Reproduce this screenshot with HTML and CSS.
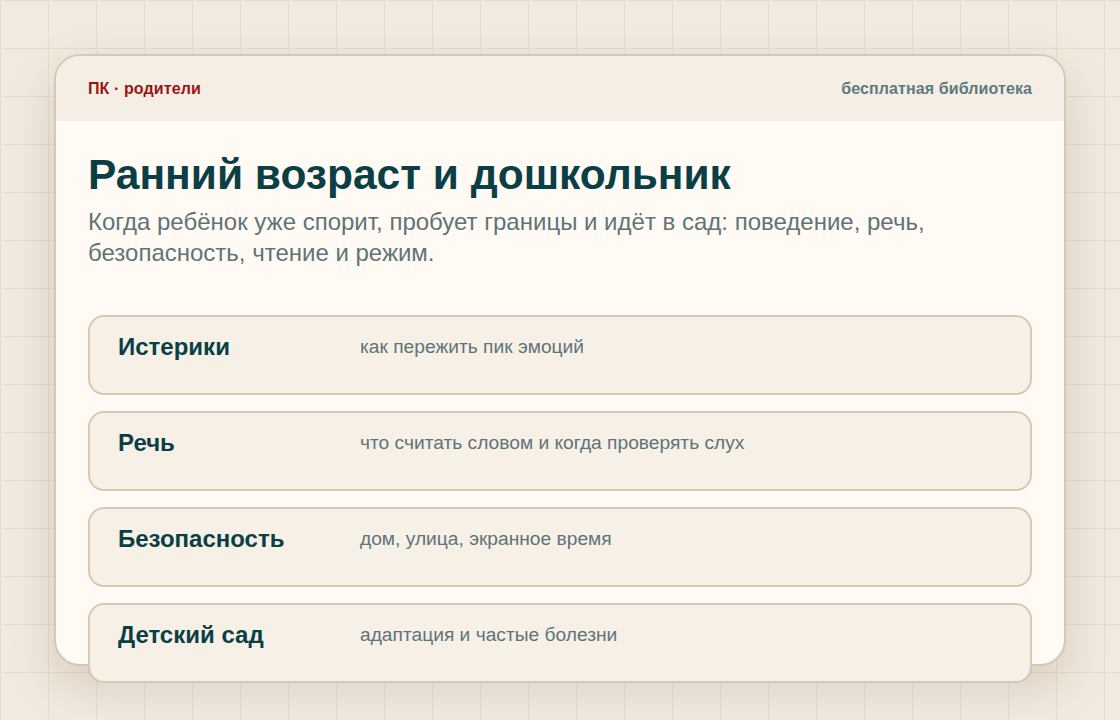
FILE: index.html
```html
<!DOCTYPE html>
<html lang="ru">
<head>
  <meta charset="UTF-8" />
  <meta name="viewport" content="width=device-width, initial-scale=1.0"/>
  <title>Ранний возраст и дошкольник</title>
  <link rel="stylesheet" href="styles.css">
</head>
<body>
  <div class="card">
    <header class="card-head">
      <span class="brand">ПК · родители</span>
      <span class="tag">бесплатная библиотека</span>
    </header>
    <main class="card-body">
      <h1>Ранний возраст и дошкольник</h1>
      <p class="lead">Когда ребёнок уже спорит, пробует границы и идёт в сад: поведение, речь, безопасность, чтение и режим.</p>
      <ul class="topics">
        <li class="topic">
          <span class="topic-title">Истерики</span>
          <span class="topic-desc">как пережить пик эмоций</span>
        </li>
        <li class="topic">
          <span class="topic-title">Речь</span>
          <span class="topic-desc">что считать словом и когда проверять слух</span>
        </li>
        <li class="topic">
          <span class="topic-title">Безопасность</span>
          <span class="topic-desc">дом, улица, экранное время</span>
        </li>
        <li class="topic">
          <span class="topic-title">Детский сад</span>
          <span class="topic-desc">адаптация и частые болезни</span>
        </li>
      </ul>
    </main>
  </div>
</body>
</html>
```

FILE: styles.css
```css
* {
  box-sizing: border-box;
  font-family: 'Liberation Sans', Arial, sans-serif;
}

body {
  margin: 0;
  height: 720px;
  overflow: hidden;
  background-color: #f2eae0;
  background-image:
    linear-gradient(#e8dccb 1px, transparent 1px),
    linear-gradient(90deg, #e8dccb 1px, transparent 1px);
  background-size: 48px 48px;
  padding: 54px;
}

.card {
  height: 612px;
  background: #fffaf3;
  border: 2px solid #d6c8b4;
  border-radius: 26px;
  box-shadow: 0 18px 48px rgba(110, 80, 50, 0.2);
}

.card-head {
  display: flex;
  justify-content: space-between;
  align-items: center;
  height: 65px;
  padding: 0 32px;
  background: #f5eee4;
  border-radius: 24px 24px 0 0;
  font-size: 16px;
  font-weight: bold;
  letter-spacing: 0.1px;
}

.brand {
  color: #9b1414;
}

.tag {
  color: #5f7a7e;
}

.card-body {
  padding: 28px 32px 0;
}

h1 {
  margin: 0;
  font-size: 42.5px;
  line-height: 1.2;
  color: #0b3f46;
}

.lead {
  margin: 6px 0 0;
  font-size: 24px;
  line-height: 31px;
  color: #5f7478;
}

.topics {
  list-style: none;
  margin: 47px 0 0;
  padding: 0;
  display: flex;
  flex-direction: column;
  gap: 16px;
}

.topic {
  display: grid;
  grid-template-columns: 242px 1fr;
  align-items: start;
  height: 80px;
  padding: 16px 28px;
  background: #f6f0e6;
  border: 2px solid #d6c8b4;
  border-radius: 16px;
}

.topic-title {
  font-size: 24px;
  font-weight: bold;
  color: #0b3f46;
}

.topic-desc {
  padding-top: 3px;
  font-size: 19.2px;
  color: #5f7478;
}
```
